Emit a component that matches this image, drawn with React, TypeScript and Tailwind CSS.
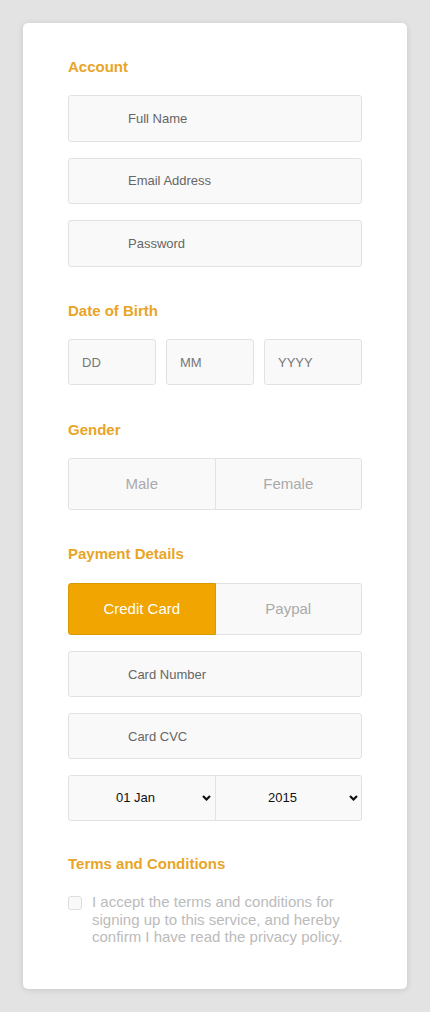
import React from 'react';

const font = { fontFamily: '"Liberation Sans", Arial, sans-serif' };

const Heading: React.FC<{ children: React.ReactNode; className?: string }> = ({ children, className = '' }) => (
  <h4 className={`text-[15px] leading-[17px] font-bold text-[#e8a526] ${className}`}>{children}</h4>
);

const Field: React.FC<{ placeholder: string; type?: string; tall?: boolean }> = ({ placeholder, type = 'text', tall }) => (
  <input
    type={type}
    placeholder={placeholder}
    className={`${tall ? 'h-[46.5px]' : 'h-[46px]'} w-full rounded-[3px] border border-[#e2e2e2] bg-[#f9f9f9] pl-[59px] text-[13px] text-[#555] outline-none placeholder:text-[#666]`}
  />
);

const Chevron = () => (
  <svg width="9" height="6" viewBox="0 0 9 6" className="shrink-0">
    <path d="M1 1 L4.5 4.5 L8 1" fill="none" stroke="#111" strokeWidth="2.2" />
  </svg>
);

const FakeSelect: React.FC<{ value: string; side: 'left' | 'right' }> = ({ value, side }) => (
  <div
    className={
      side === 'left'
        ? 'flex h-[46px] flex-1 items-center rounded-l-[3px] border border-[#e2e2e2] bg-[#f9f9f9] pr-[4px]'
        : 'flex h-[46px] flex-1 items-center rounded-r-[3px] border border-l-0 border-[#e2e2e2] bg-[#f9f9f9] pr-[3px]'
    }
  >
    <span className="flex-1 text-center text-[13px] text-[#111]">{value}</span>
    <Chevron />
  </div>
);

export default function App() {
  return (
    <div className="min-h-[1012px] bg-[#e3e3e3] px-[23px] py-[23px]" style={font}>
      <div className="rounded-[5px] bg-white px-[45px] pt-[35px] pb-[43px] shadow-[0_1px_6px_rgba(0,0,0,0.12)]">
        <form className="flex flex-col">
          <Heading className="mb-5">Account</Heading>
          <div className="flex flex-col gap-4">
            <Field placeholder="Full Name" tall />
            <Field placeholder="Email Address" tall />
            <Field placeholder="Password" type="password" tall />
          </div>

          <Heading className="mt-[35.5px] mb-5">Date of Birth</Heading>
          <div className="flex gap-[10px]">
            {['DD', 'MM', 'YYYY'].map((p, i) => (
              <input
                key={p}
                placeholder={p}
                className={`h-[46px] ${i === 2 ? 'w-[98px]' : 'w-[88px]'} rounded-[3px] border border-[#e2e2e2] bg-[#f9f9f9] pl-[13px] text-[13px] outline-none placeholder:text-[#777]`}
              />
            ))}
          </div>

          <Heading className="mt-9 mb-5">Gender</Heading>
          <div className="flex h-[52px]">
            <button type="button" className="flex-1 rounded-l-[3px] border border-[#e2e2e2] bg-[#f9f9f9] text-[15px] text-[#aaa]">
              Male
            </button>
            <button type="button" className="flex-1 rounded-r-[3px] border border-l-0 border-[#e2e2e2] bg-[#f9f9f9] text-[15px] text-[#aaa]">
              Female
            </button>
          </div>

          <Heading className="mt-[35px] mb-[21px]">Payment Details</Heading>
          <div className="flex flex-col gap-4">
            <div className="flex h-[52px]">
              <button type="button" className="flex-1 rounded-l-[3px] border border-[#d89a00] bg-[#f0a500] text-[15px] text-white">
                Credit Card
              </button>
              <button type="button" className="flex-1 rounded-r-[3px] border border-l-0 border-[#e2e2e2] bg-[#f9f9f9] text-[15px] text-[#aaa]">
                Paypal
              </button>
            </div>
            <Field placeholder="Card Number" />
            <Field placeholder="Card CVC" />
            <div className="flex">
              <FakeSelect value="01 Jan" side="left" />
              <FakeSelect value="2015" side="right" />
            </div>
          </div>

          <Heading className="mt-[34px] mb-[21px]">Terms and Conditions</Heading>
          <label className="flex items-start gap-[10px]">
            <span className="mt-[3px] h-[14px] w-[14px] shrink-0 rounded-[3px] border border-[#ddd] bg-[#f9f9f9]" />
            <span className="text-[15px] leading-[17.5px] text-[#bbb]">
              I accept the terms and conditions for signing up to this service, and hereby confirm I have read the privacy policy.
            </span>
          </label>
        </form>
      </div>
    </div>
  );
}
